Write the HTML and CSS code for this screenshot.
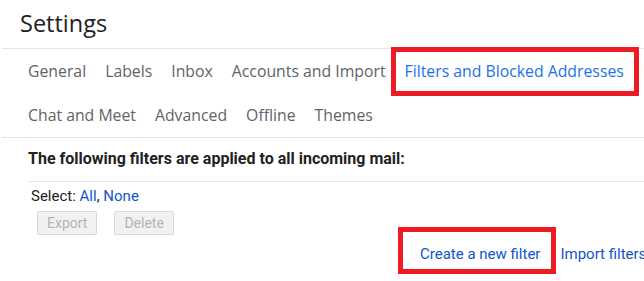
FILE: index.html
```html
<!DOCTYPE html>
<html lang="en">
<head>
  <meta charset="UTF-8" />
  <title>Settings - Filters and Blocked Addresses</title>
  <link rel="stylesheet" href="styles.css">
</head>
<body>
  <div class="page">
    <h1 class="title">Settings</h1>

    <!-- tab bar, two rows -->
    <nav class="tabs">
      <div class="tab-row">
        <a class="tab">General</a>
        <a class="tab">Labels</a>
        <a class="tab">Inbox</a>
        <a class="tab">Accounts and Import</a>
        <a class="tab active">Filters and Blocked Addresses<span class="mark mark-tab"></span></a>
        <a class="tab">Forwarding and POP/IMAP</a>
      </div>
      <div class="tab-row">
        <a class="tab">Chat and Meet</a>
        <a class="tab">Advanced</a>
        <a class="tab">Offline</a>
        <a class="tab">Themes</a>
      </div>
    </nav>

    <section class="filters">
      <h2 class="filters-head">The following filters are applied to all incoming mail:</h2>
      <div class="select-line">Select: <a class="link">All</a>, <a class="link">None</a></div>
      <div class="btns">
        <button disabled>Export</button>
        <button disabled>Delete</button>
      </div>
      <div class="actions">
        <a class="link action">Create a new filter<span class="mark mark-create"></span></a>
        <a class="link">Import filters</a>
      </div>
    </section>
  </div>
</body>
</html>
```

FILE: styles.css
```css
* {
  box-sizing: border-box;
}
html {
  overflow: hidden;
}
body {
  margin: 0;
  min-height: 100vh;
  background: #fff;
}
.page {
  min-height: 100vh;
  padding-left: 2px;
  font-family: Roboto, 'Liberation Sans', sans-serif;
}
.title {
  margin: 0;
  height: 49px;
  padding-left: 18px;
  font-family: 'Open Sans', sans-serif;
  font-weight: 400;
  font-size: 23.5px;
  line-height: 46px;
  color: #202124;
  border-bottom: 1px solid #e5e5e5;
}
.tabs {
  border-bottom: 1px solid #e5e5e5;
}
.tab-row {
  display: flex;
  gap: 19px;
  height: 44px;
  padding-left: 26px;
  white-space: nowrap;
}
.tab {
  position: relative;
  font-family: 'Open Sans', sans-serif;
  font-size: 15.8px;
  line-height: 44px;
  color: #5f6368;
}
.tab.active {
  color: #1a73e8;
}
.mark {
  position: absolute;
  border: 5px solid #ed1c24;
}
.mark-tab {
  top: -2px;
  bottom: -3px;
  left: -14px;
  right: -15px;
}
.filters {
  padding-left: 26px;
  font-size: 15px;
  color: #222;
}
.filters-head {
  margin: 0;
  height: 44px;
  font-size: 16px;
  font-weight: 700;
  line-height: 41px;
  border-bottom: 1px solid #e5e5e5;
}
.select-line {
  margin-top: 4px;
  padding-left: 3px;
  line-height: 20px;
}
.link {
  color: #15c;
}
.btns {
  display: flex;
  gap: 17px;
  margin-top: 5px;
  padding-left: 9px;
}
.btns button {
  height: 24px;
  padding: 0 9px;
  font-family: Roboto, sans-serif;
  font-size: 14px;
  color: #b5b5b5;
  background: #f1f1f1;
  border: 1px solid #d9d9d9;
  border-radius: 2px;
}
.actions {
  display: flex;
  gap: 20px;
  margin-top: 9px;
  padding-left: 392px;
  line-height: 20px;
  white-space: nowrap;
}
.action {
  position: relative;
}
.mark-create {
  top: -17px;
  bottom: -10px;
  left: -22px;
  right: -16px;
}
```
